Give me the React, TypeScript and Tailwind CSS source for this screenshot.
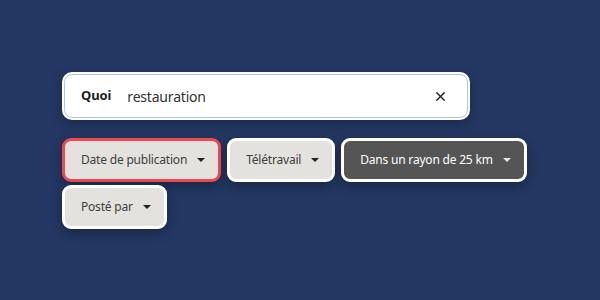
import { X } from 'lucide-react';

const chips = [
  { label: 'Date de publication', variant: 'active' },
  { label: 'Télétravail', variant: 'default' },
  { label: 'Dans un rayon de 25 km', variant: 'dark' },
  { label: 'Posté par', variant: 'default' },
];

function Caret({ className }: { className: string }) {
  return (
    <svg width="8" height="4" viewBox="0 0 8 4" className={className}>
      <path d="M0 0h8L4 4z" fill="currentColor" />
    </svg>
  );
}

export default function App() {
  return (
    <div
      className="w-[600px] h-[300px] bg-[#233762] pt-[72px] pl-[62px]"
      style={{ fontFamily: '"Noto Sans", "Open Sans", sans-serif' }}
    >
      {/* Search field */}
      <div className="w-[408px] h-[48px] rounded-[10px] border-2 border-white bg-white shadow-[0_4px_12px_rgba(0,0,0,0.25)]">
        <div className="h-full flex items-center rounded-[8px] border border-[#b7c4de] pl-[16px] pr-[19px]">
          <span className="text-[13px] font-bold text-[#222] tracking-[-0.1px]">Quoi</span>
          <span className="ml-[16px] text-[14px] text-[#333] tracking-[-0.2px] flex-1">restauration</span>
          <X className="w-[15px] h-[15px] text-[#1c1c1c]" strokeWidth={2.2} />
        </div>
      </div>

      {/* Filter chips */}
      <div className="w-[470px] flex flex-wrap gap-x-[6px] gap-y-[3px] mt-[18px]">
        {chips.map((c) => (
          <button
            key={c.label}
            className={
              c.variant === 'active'
                ? 'h-[44px] flex items-center gap-[10px] pl-[16px] pr-[13px] rounded-[9px] border-[3px] border-[#ec4a50] bg-[#e4e2df] text-[#3e3e3e] text-[12px] tracking-[-0.2px] shadow-[0_4px_12px_rgba(0,0,0,0.3)]'
                : c.variant === 'dark'
                ? 'h-[44px] flex items-center gap-[10px] pl-[16px] pr-[13px] rounded-[9px] border-[3px] border-white bg-[#555555] text-white text-[12px] tracking-[-0.2px] shadow-[0_4px_12px_rgba(0,0,0,0.3)]'
                : 'h-[44px] flex items-center gap-[10px] pl-[16px] pr-[13px] rounded-[9px] border-[3px] border-white bg-[#e4e2df] text-[#3e3e3e] text-[12px] tracking-[-0.2px] shadow-[0_4px_12px_rgba(0,0,0,0.3)]'
            }
          >
            <span>{c.label}</span>
            <Caret className={c.variant === 'dark' ? 'text-[#e8e8e8]' : 'text-[#222]'} />
          </button>
        ))}
      </div>
    </div>
  );
}
